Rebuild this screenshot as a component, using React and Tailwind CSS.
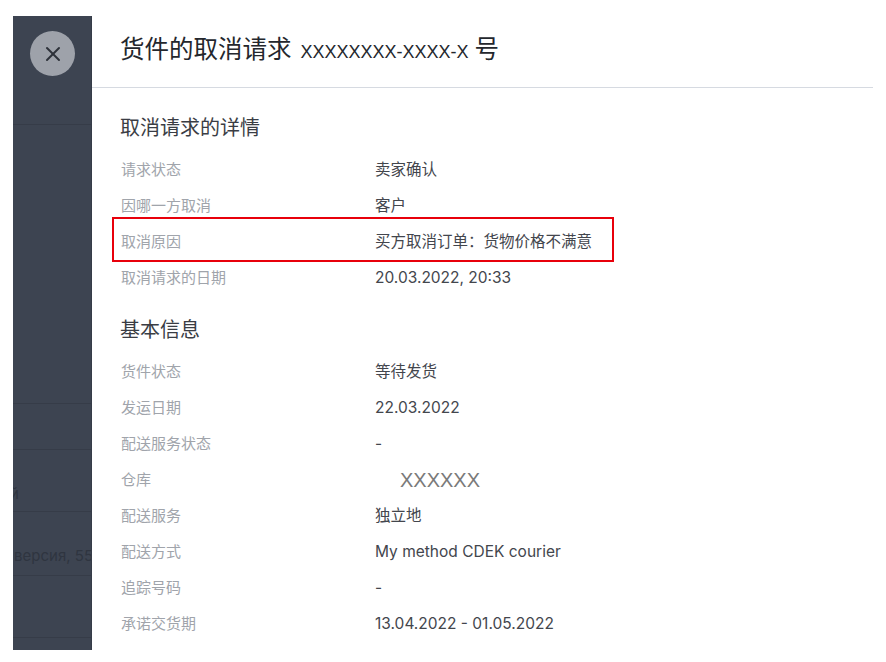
import { X } from 'lucide-react';

const cancelRows = [
  ['请求状态', '卖家确认'],
  ['因哪一方取消', '客户'],
  ['取消原因', '买方取消订单：货物价格不满意', true],
  ['取消请求的日期', '20.03.2022, 20:33'],
];

const baseRows = [
  ['货件状态', '等待发货'],
  ['发运日期', '22.03.2022'],
  ['配送服务状态', '-'],
  ['仓库', 'XXXXXX', false, true],
  ['配送服务', '独立地'],
  ['配送方式', 'My method CDEK courier'],
  ['追踪号码', '-'],
  ['承诺交货期', '13.04.2022 - 01.05.2022'],
];

function Row({ label, value, marked, masked }) {
  return (
    <div className="relative flex h-[36px] items-center text-[15px]">
      {marked && (
        <div className="pointer-events-none absolute left-[-8px] top-[-7px] h-[45px] w-[502px] border-2 border-[#e8000b]" />
      )}
      <div className="w-[255px] shrink-0 pl-[1px] text-[#a0a4ab]">{label}</div>
      {masked
        ? <div className="pl-[25px] font-['Liberation_Sans',sans-serif] text-[20px] text-[#7a7a7a]">{value}</div>
        : <div className="text-[15.5px] text-[#43464d]">{value}</div>}
    </div>
  );
}

export default function App() {
  return (
    <div className="flex min-h-[662px] bg-white pl-[13px] pt-[16px] font-['Inter','Noto_Sans_CJK_SC',sans-serif]">
      {/* dimmed page behind the drawer */}
      <div className="relative h-[634px] w-[79px] shrink-0 overflow-hidden border-r border-[#363c48] bg-[#3d4451] text-[15px] text-[#2f3540]">
        <div className="h-[109px] border-b border-[#363c48]" />
        <div className="h-[279px] border-b border-[#363c48]" />
        <div className="h-[46px] border-b border-[#363c48]" />
        <div className="flex h-[62px] border-b border-[#363c48] pt-[33px]">
          <div className="flex w-[6px] shrink-0 justify-end whitespace-nowrap">Основной</div>
        </div>
        <div className="flex h-[64px] border-b border-[#363c48] pt-[33px]">
          <div className="flex w-[80px] shrink-0 justify-end whitespace-nowrap">Мобильная версия, 55</div>
        </div>
        <div className="h-[62px] border-b border-[#363c48]" />
        <button className="absolute left-[17px] top-[15px] flex h-[45px] w-[45px] items-center justify-center rounded-full bg-[#9ea2aa] text-[#2d3139]">
          <X size={24} strokeWidth={2} />
        </button>
      </div>

      {/* drawer */}
      <div className="w-[781px] shrink-0 bg-white">
        <div className="h-[72px] border-b border-[#d6dae1] pl-[28px] pt-[17px]">
          <h1 className="flex items-baseline whitespace-nowrap text-[24.5px] leading-[32px] text-[#24272d]">
            货件的取消请求
            <span className="ml-[9px] mr-[6px] font-['Liberation_Sans',sans-serif] text-[18px]">XXXXXXXX-XXXX-X</span>
            号
          </h1>
        </div>

        <div className="pl-[28px] pt-[26px]">
          <h2 className="mb-[10px] h-[28px] text-[20px] leading-[28px] text-[#3a3d44]">取消请求的详情</h2>
          {cancelRows.map(([l, v, m]) => <Row key={l} label={l} value={v} marked={m} />)}

          <h2 className="mb-[10px] mt-[20px] h-[28px] text-[20px] leading-[28px] text-[#3a3d44]">基本信息</h2>
          {baseRows.map(([l, v, m, x]) => <Row key={l} label={l} value={v} marked={m} masked={x} />)}
        </div>
      </div>
    </div>
  );
}
